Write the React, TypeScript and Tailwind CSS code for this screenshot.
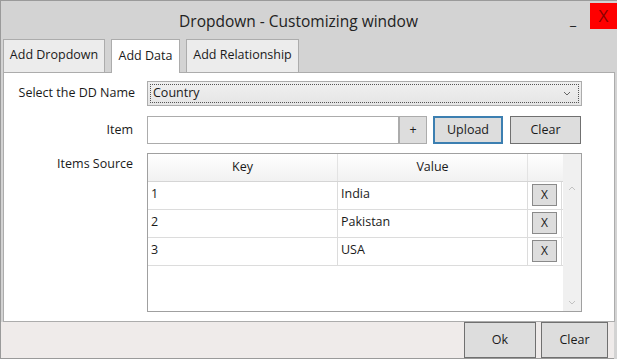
import { useState } from "react";

const rows = [
  { key: "1", value: "India" },
  { key: "2", value: "Pakistan" },
  { key: "3", value: "USA" },
];

const grayBtn = "h-full flex items-center justify-center bg-[#dddddd] text-[#1a1a1a]";

const App = () => {
  const [item, setItem] = useState("");

  return (
    <div className="w-[617px] h-[359px] bg-[#d3d3d3] border-t border-l border-[#9a9a9a] flex flex-col font-['Open_Sans',sans-serif] text-[12.5px] text-[#1a1a1a]">
      {/* title bar */}
      <div className="h-[38px] flex items-start">
        <div className="flex-1 pl-[26px] pt-[9px] text-center text-[15.5px] text-[#222]">
          Dropdown - Customizing window
        </div>
        <div className="pt-[12px] w-[20px] text-[14px] leading-[14px]">_</div>
        <div className="mt-[2px] w-[27px] h-[26px] bg-[#ff0000] text-[#8a0000] text-[17px] flex items-center justify-center">
          X
        </div>
      </div>

      {/* tabs */}
      <div className="h-[33px] flex items-stretch gap-[6px] pl-[2px]">
        <div className="w-[102px] border border-b-0 border-[#acacac] bg-[#ececec] flex items-center justify-center">
          Add Dropdown
        </div>
        <div className="w-[69px] border border-b-0 border-[#acacac] bg-white flex items-center justify-center -mb-px z-10">
          Add Data
        </div>
        <div className="w-[113px] border border-b-0 border-[#acacac] bg-[#ececec] flex items-center justify-center">
          Add Relationship
        </div>
      </div>

      {/* content */}
      <div className="ml-[2px] w-[612px] h-[251px] border border-[#acacac] bg-white pt-[8px]">
        <div className="grid grid-cols-[131px_1fr] gap-x-[12px] pr-[32px]">
          <div className="h-[25px] flex items-center justify-end pt-px">Select the DD Name</div>
          <div className="h-[25px] border border-[#acacac] bg-gradient-to-b from-[#f0f0f0] to-[#e5e5e5] p-[2px]">
            <div className="h-full border border-dotted border-[#555] flex items-center justify-between px-[2px] pt-px">
              <span>Country</span>
              <svg width="8" height="5" viewBox="0 0 8 5" className="mr-[5px]">
                <path d="M1 1 L4 4 L7 1" stroke="#666" fill="none" strokeWidth="1" />
              </svg>
            </div>
          </div>

          <div className="h-[28px] mt-[10px] flex items-center justify-end pr-[2px] pt-[2px]">Item</div>
          <div className="h-[28px] mt-[10px] flex items-stretch">
            <input
              value={item}
              onChange={(e) => setItem(e.target.value)}
              className="w-[252px] h-full border border-[#acacac] outline-none px-1 bg-white"
            />
            <div className={`w-[28px] ${grayBtn} border border-[#acacac] pt-px`}>+</div>
            <div className={`w-[70px] ml-[6px] ${grayBtn} border-2 border-[#3c7fb1] pt-px`}>Upload</div>
            <div className={`w-[71px] ml-[7px] ${grayBtn} border border-[#707070] pt-px`}>Clear</div>
          </div>

          <div className="mt-[9px] h-[22px] flex items-center justify-end pr-[2px] pt-[2px]">Items Source</div>
          <div className="mt-[9px] h-[159px] border border-[#a0a0a0] flex">
            <div className="flex-1 flex flex-col">
              <div className="h-[28px] flex border-b border-[#d5d5d5] bg-gradient-to-b from-white to-[#f1f1f1]">
                <div className="w-[190px] border-r border-[#e3e3e3] flex items-center justify-center pt-px">Key</div>
                <div className="w-[190px] border-r border-[#e3e3e3] flex items-center justify-center pt-px">Value</div>
                <div className="flex-1" />
              </div>
              {rows.map((r) => (
                <div key={r.key} className="h-[28px] flex border-b border-[#dcdcdc]">
                  <div className="w-[190px] border-r border-[#dcdcdc] px-[3px] pt-[3px]">{r.key}</div>
                  <div className="w-[190px] border-r border-[#dcdcdc] px-[3px] pt-[3px]">{r.value}</div>
                  <div className="w-[34px] border-r border-[#dcdcdc] flex items-center justify-center">
                    <div className="w-[25px] h-[22px] bg-[#dddddd] border border-[#8a8a8a] flex items-center justify-center text-[12px]">
                      X
                    </div>
                  </div>
                </div>
              ))}
            </div>
            <div className="w-[18px] bg-[#f0f0f0] flex flex-col items-center justify-between py-[6px]">
              <svg width="8" height="5" viewBox="0 0 8 5" className="mt-[26px]">
                <path d="M1 4 L4 1 L7 4" stroke="#c2c2c2" fill="none" strokeWidth="1" />
              </svg>
              <svg width="8" height="5" viewBox="0 0 8 5">
                <path d="M1 1 L4 4 L7 1" stroke="#c2c2c2" fill="none" strokeWidth="1" />
              </svg>
            </div>
          </div>
        </div>
      </div>

      {/* footer */}
      <div className="h-[37px] w-[614px] bg-[#efebea] flex items-center justify-end gap-[5px] pr-[6px] border-b border-l border-[#9a9a9a] -ml-px">
        <div className={`w-[72px] h-[31px] ${grayBtn} border border-[#707070] pt-px`}>Ok</div>
        <div className={`w-[67px] h-[31px] ${grayBtn} border border-[#707070] pt-px`}>Clear</div>
      </div>
    </div>
  );
};

export default App;
